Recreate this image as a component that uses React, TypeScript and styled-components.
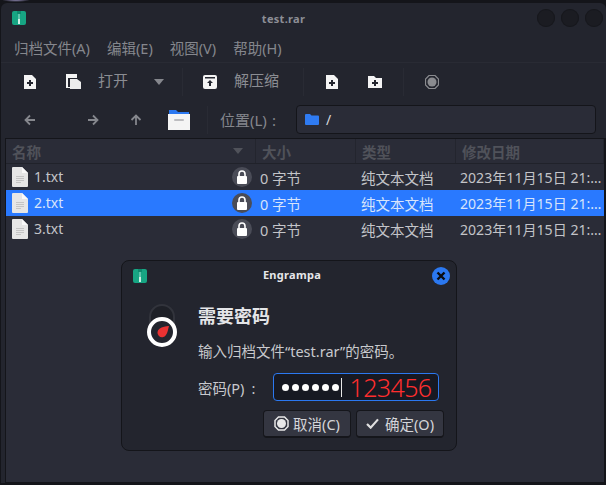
import React from "react";
import styled, { createGlobalStyle } from "styled-components";

const GlobalStyle = createGlobalStyle`
  html, body {
    margin: 0;
    padding: 0;
    width: 606px;
    height: 485px;
    overflow: hidden;
    background: #14151a;
    font-family: "Noto Sans", "Noto Sans CJK SC", sans-serif;
  }
`;

const Desktop = styled.div`
  position: relative;
  width: 606px;
  height: 485px;
  padding: 3px 0 2px 1px;
  box-sizing: border-box;
  background: radial-gradient(ellipse 14px 2px at 16px 0, #8d86b0, transparent);
`;

const Window = styled.div`
  height: 100%;
  background: #23252e;
  border-radius: 6px 6px 0 0;
  display: flex;
  flex-direction: column;
`;

const TitleBar = styled.div`
  height: 30px;
  flex: none;
  display: flex;
  align-items: center;
  padding: 0 3px 0 11px;
  gap: 6px;
`;

const Title = styled.div`
  flex: 1;
  text-align: center;
  font-size: 11px;
  font-weight: 700;
  letter-spacing: 0.3px;
  color: #8d8f96;
  padding-left: 4px;
`;

const WinButton = styled.div`
  width: 18px;
  height: 18px;
  border-radius: 50%;
  background: #1b1c22;
  box-shadow: inset 0 0 0 1px #17181d;
`;

const MenuBar = styled.div`
  height: 29px;
  flex: none;
  display: flex;
  align-items: center;
  padding: 0 13px;
  gap: 17px;
  font-size: 14.500px;
  color: #85878d;
  border-bottom: 1px solid #292b34;
`;

const ToolBar = styled.div`
  height: 34px;
  flex: none;
  display: flex;
  align-items: center;
  box-sizing: border-box;
  padding-top: 3px;
`;

const ToolSlot = styled.div<{ $w: number }>`
  width: ${(p) => p.$w}px;
  flex: none;
  display: flex;
  align-items: center;
  justify-content: center;
`;

const ToolLabel = styled.span<{ $w: number }>`
  width: ${(p) => p.$w}px;
  flex: none;
  font-size: 15px;
  color: #8b8d93;
  margin-top: -4px;
`;

const Sep = styled.div<{ $h?: number }>`
  width: 1px;
  height: ${(p) => p.$h ?? 28}px;
  flex: none;
  background: #292b34;
`;

const LocationBar = styled.div`
  height: 41px;
  flex: none;
  display: flex;
  align-items: center;
  box-sizing: border-box;
  padding-top: 4px;
`;

const LocationLabel = styled.span`
  font-size: 15px;
  color: #85878d;
  margin-left: 12px;
  width: 76px;
  flex: none;
  white-space: nowrap;
`;

const Colon = styled.span<{ $m: number }>`
  margin-left: ${(p) => p.$m}px;
`;

const PathField = styled.div`
  width: 300px;
  height: 29px;
  flex: none;
  box-sizing: border-box;
  background: #2a2c37;
  border: 1px solid #14151a;
  border-radius: 4px;
  display: flex;
  align-items: center;
  padding-left: 8px;
  gap: 7px;
  font-size: 14px;
  color: #d5d6da;
`;

const ListFrame = styled.div`
  flex: 1;
  min-height: 0;
  margin-left: 4px;
  width: 601px;
  background: #2a2c37;
  border: 1px solid #14151a;
  border-right-width: 2px;
  box-sizing: border-box;
  display: flex;
  flex-direction: column;
`;

const columns = "250px 100px 100px 1fr";

const HeaderRow = styled.div`
  display: grid;
  grid-template-columns: ${columns};
  height: 24px;
  flex: none;
  border-bottom: 1px solid #20222a;
`;

const HeaderCell = styled.div`
  display: flex;
  align-items: center;
  justify-content: space-between;
  padding: 0 6px;
  font-size: 14.500px;
  font-weight: 700;
  color: #50525a;
  border-right: 1px solid #23252e;
  &:first-child {
    padding-right: 12px;
  }
`;

const Row = styled.div<{ $selected?: boolean }>`
  display: grid;
  grid-template-columns: ${columns};
  height: 26px;
  flex: none;
  align-items: center;
  font-size: 14.500px;
  color: ${(p) => (p.$selected ? "#d7e4fb" : "#c3c4c8")};
  background: ${(p) => (p.$selected ? "#2979ff" : "transparent")};
`;

const NameCell = styled.div`
  display: flex;
  align-items: center;
  padding-left: 6px;
  gap: 6px;
  position: relative;
  line-height: 24px;
`;

const FileName = styled.span`
  font-size: 14px;
`;

const LockBadge = styled.div`
  position: absolute;
  right: 4px;
  top: 50%;
  margin-top: -10px;
  width: 20px;
  height: 20px;
  border-radius: 50%;
  background: #4a4c57;
  display: flex;
  align-items: center;
  justify-content: center;
`;

const Cell = styled.div<{ $pad: number }>`
  padding-left: ${(p) => p.$pad}px;
  white-space: nowrap;
`;

const DateCell = styled(Cell)`
  font-size: 14.100px;
`;

const Dialog = styled.div`
  position: absolute;
  left: 121px;
  top: 260px;
  width: 336px;
  height: 191px;
  box-sizing: border-box;
  background: #23252e;
  border: 1px solid #14151a;
  border-radius: 8px;
  display: flex;
  flex-direction: column;
`;

const DialogTitleBar = styled.div`
  height: 28px;
  flex: none;
  display: flex;
  align-items: center;
  padding: 0 6px 0 11px;
  margin-top: 1px;
`;

const DialogTitle = styled.div`
  flex: 1;
  text-align: center;
  font-size: 11px;
  font-weight: 700;
  letter-spacing: 0.3px;
  color: #e6e7ea;
  padding-left: 5px;
  margin-top: -3px;
`;

const DialogClose = styled.div`
  width: 18px;
  height: 18px;
  border-radius: 50%;
  background: #2b78f0;
  display: flex;
  align-items: center;
  justify-content: center;
`;

const DialogBody = styled.div`
  display: flex;
  padding: 14px 0 0 23px;
  gap: 19px;
`;

const DialogText = styled.div`
  display: flex;
  flex-direction: column;
`;

const Heading = styled.div`
  font-size: 18px;
  font-weight: 700;
  color: #e4e5e8;
  line-height: 24px;
`;

const Message = styled.div`
  font-size: 14.500px;
  color: #c8c9cd;
  line-height: 18px;
  margin-top: 14px;
  white-space: nowrap;
`;

const FieldRow = styled.div`
  display: flex;
  align-items: center;
  margin-top: 13px;
  padding-left: 76px;
`;

const FieldLabel = styled.span`
  font-size: 14.500px;
  color: #c8c9cd;
  width: 75px;
  flex: none;
  white-space: nowrap;
`;

const PasswordInput = styled.div`
  width: 166px;
  height: 28px;
  box-sizing: border-box;
  background: #171922;
  border: 1px solid #2b78f0;
  border-radius: 4px;
  display: flex;
  align-items: center;
  padding-left: 8px;
`;

const Dots = styled.span`
  display: flex;
  gap: 3.100px;
`;

const Dot = styled.i`
  display: block;
  width: 7px;
  height: 7px;
  border-radius: 50%;
  background: #fff;
`;

const Caret = styled.i`
  display: block;
  width: 1px;
  height: 19px;
  background: #e8e8e8;
  margin: 0 7px 0 2px;
`;

const Typed = styled.span`
  font-size: 25px;
  font-weight: 300;
  line-height: 26px;
  color: #ff2e2e;
  letter-spacing: -0.600px;
`;

const Actions = styled.div`
  display: flex;
  justify-content: flex-end;
  gap: 5px;
  margin-top: 9px;
  padding-right: 12px;
`;

const DialogButton = styled.div`
  width: 88px;
  height: 28px;
  box-sizing: border-box;
  background: #343641;
  border: 1px solid #15161b;
  border-bottom-width: 2px;
  border-radius: 4px;
  display: flex;
  align-items: center;
  justify-content: center;
  gap: 4px;
  font-size: 14.500px;
  color: #d4d5d9;
`;

const ZipIcon = () => (
  <svg width="14" height="14" viewBox="0 0 14 14">
    <rect width="14" height="14" rx="2" fill="#17a583" />
    <rect x="5" y="0" width="4" height="3" fill="#0f8a6e" />
    <rect x="6" y="3" width="2" height="5" fill="#5fc4ac" />
    <rect x="6" y="8" width="2" height="5" fill="#cfeee5" />
  </svg>
);

const NewFileIcon = () => (
  <svg width="12" height="14" viewBox="0 0 12 14">
    <path d="M0 0h8l4 4v10H0z" fill="#f4f4f4" />
    <path d="M5 5h2v2h2v2H7v2H5V9H3V7h2z" fill="#23252e" />
  </svg>
);

const OpenIcon = () => (
  <svg width="15" height="15" viewBox="0 0 15 15">
    <path d="M0 0h11v4H2v9h2v1H0z" fill="#f4f4f4" />
    <path d="M4 5h7l4 3v7H4z" fill="#ececec" />
  </svg>
);

const ExtractIcon = () => (
  <svg width="14" height="14" viewBox="0 0 14 14">
    <path d="M2 0h10a2 2 0 0 1 2 2v10a2 2 0 0 1-2 2H2a2 2 0 0 1-2-2V2a2 2 0 0 1 2-2z" fill="#f4f4f4" />
    <rect x="2" y="2" width="10" height="1.500" fill="#23252e" />
    <path d="M7 5l3 3H8v3H6V8H4z" fill="#23252e" />
  </svg>
);

const AddFolderIcon = () => (
  <svg width="14" height="12" viewBox="0 0 14 12">
    <path d="M0 0h6l2 2h6v10H0z" fill="#f4f4f4" />
    <path d="M6 4h2v2h2v2H8v2H6V8H4V6h2z" fill="#23252e" />
  </svg>
);

const StopIcon = () => (
  <svg width="14" height="14" viewBox="0 0 14 14">
    <path d="M4 .5h6L13.500 4v6L10 13.500H4L.5 10V4z" fill="none" stroke="#8a8b8f" strokeWidth="1.200" />
    <circle cx="7" cy="7" r="4.500" fill="#8a8b8f" />
  </svg>
);

const CaretDown = ({ color = "#85878d" }: { color?: string }) => (
  <svg width="10" height="6" viewBox="0 0 10 6">
    <path d="M0 0h10L5 6z" fill={color} />
  </svg>
);

const Arrow = ({ rotate }: { rotate: number }) => (
  <svg width="12" height="12" viewBox="0 0 12 12" style={{ transform: `rotate(${rotate}deg)` }}>
    <path d="M11 6H2M6 1.500L1.500 6 6 10.500" fill="none" stroke="#85878d" strokeWidth="1.800" />
  </svg>
);

const PlaceIcon = () => (
  <svg width="22" height="20" viewBox="0 0 22 20">
    <path d="M1 0h7l2 2h11v3H1z" fill="#2b78f0" />
    <path d="M0 4h22v16H0z" fill="#f4f4f4" />
    <rect x="6" y="9" width="10" height="2" rx="1" fill="#bdbdc0" />
  </svg>
);

const BlueFolder = () => (
  <svg width="14" height="11" viewBox="0 0 14 11">
    <path d="M0 1a1 1 0 0 1 1-1h4l1.500 1.500H13a1 1 0 0 1 1 1V10a1 1 0 0 1-1 1H1a1 1 0 0 1-1-1z" fill="#2f7bf2" />
  </svg>
);

const TextFileIcon = () => (
  <svg width="16" height="20" viewBox="0 0 16 20">
    <path d="M0 1a1 1 0 0 1 1-1h9l6 6v13a1 1 0 0 1-1 1H1a1 1 0 0 1-1-1z" fill="#e6e6e6" />
    <path d="M10 0l6 6h-6z" fill="#fafafa" />
    <path d="M4 9h8v1H4zM4 11h8v1H4zM4 13h8v1H4zM4 15h5v1H4z" fill="#c4c4c4" />
  </svg>
);

const LockIcon = () => (
  <svg width="12" height="14" viewBox="0 0 12 14">
    <path d="M3 6V4a3 3 0 0 1 6 0v2" fill="none" stroke="#fff" strokeWidth="1.600" />
    <rect x="1" y="6" width="10" height="8" rx="1" fill="#fff" />
  </svg>
);

const PasswordIcon = () => (
  <svg width="34" height="44" viewBox="0 0 34 44">
    <path d="M5 22V13a12 12 0 0 1 24 0v9z" fill="#1e2027" stroke="#32343c" strokeWidth="2" />
    <circle cx="17" cy="28" r="13" fill="#23252e" stroke="#fff" strokeWidth="4" />
    <path d="M24 22C23 25 23 28 21 31A4.600 4.600 0 1 1 14.500 24.800C17 23 21 22 24 22z" fill="#ea3232" />
  </svg>
);

const CloseGlyph = () => (
  <svg width="10" height="10" viewBox="0 0 10 10">
    <path d="M1.500 1.500l7 7M8.500 1.500l-7 7" stroke="#0b0c10" strokeWidth="2.400" />
  </svg>
);

const CancelIcon = () => (
  <svg width="15" height="15" viewBox="0 0 15 15">
    <path d="M4.500 1h6L14 4.500v6L10.500 14h-6L1 10.500v-6z" fill="none" stroke="#e8e8e8" strokeWidth="1.500" />
    <circle cx="7.500" cy="7.500" r="4.500" fill="#e8e8e8" />
  </svg>
);

const CheckIcon = () => (
  <svg width="13" height="11" viewBox="0 0 14 12" style={{ marginRight: 2 }}>
    <path d="M1 6.500L5 10.500 13 1.500" fill="none" stroke="#e0e0e0" strokeWidth="2.400" />
  </svg>
);

const files = ["1.txt", "2.txt", "3.txt"];

export default function App() {
  return (
    <Desktop>
      <GlobalStyle />
      <Window>
        <TitleBar>
          <ZipIcon />
          <Title>test.rar</Title>
          <WinButton />
          <WinButton />
          <WinButton />
        </TitleBar>
        <MenuBar>
          <span>归档文件(A)</span>
          <span>编辑(E)</span>
          <span>视图(V)</span>
          <span>帮助(H)</span>
        </MenuBar>
        <ToolBar>
          <ToolSlot $w={58}>
            <NewFileIcon />
          </ToolSlot>
          <ToolSlot $w={28}>
            <OpenIcon />
          </ToolSlot>
          <ToolSlot $w={11} />
          <ToolLabel $w={55}>打开</ToolLabel>
          <ToolSlot $w={12}>
            <CaretDown />
          </ToolSlot>
          <ToolSlot $w={17} />
          <Sep />
          <ToolSlot $w={20} />
          <ToolSlot $w={14}>
            <ExtractIcon />
          </ToolSlot>
          <ToolSlot $w={17} />
          <ToolLabel $w={69}>解压缩</ToolLabel>
          <Sep />
          <ToolSlot $w={56}>
            <NewFileIcon />
          </ToolSlot>
          <ToolSlot $w={30}>
            <AddFolderIcon />
          </ToolSlot>
          <ToolSlot $w={13} />
          <Sep />
          <ToolSlot $w={56}>
            <StopIcon />
          </ToolSlot>
        </ToolBar>
        <LocationBar>
          <ToolSlot $w={58}>
            <Arrow rotate={0} />
          </ToolSlot>
          <ToolSlot $w={68}>
            <Arrow rotate={180} />
          </ToolSlot>
          <ToolSlot $w={18}>
            <Arrow rotate={90} />
          </ToolSlot>
          <ToolSlot $w={23} />
          <ToolSlot $w={22}>
            <PlaceIcon />
          </ToolSlot>
          <ToolSlot $w={17} />
          <Sep />
          <LocationLabel>
            位置(L)
            <Colon $m={5}>:</Colon>
          </LocationLabel>
          <PathField>
            <BlueFolder />/
          </PathField>
        </LocationBar>
        <ListFrame>
          <HeaderRow>
            <HeaderCell>
              名称
              <CaretDown color="#50525a" />
            </HeaderCell>
            <HeaderCell>大小</HeaderCell>
            <HeaderCell>类型</HeaderCell>
            <HeaderCell>修改日期</HeaderCell>
          </HeaderRow>
          {files.map((name, i) => (
            <Row key={name} $selected={i === 1}>
              <NameCell>
                <TextFileIcon />
                <FileName>{name}</FileName>
                <LockBadge>
                  <LockIcon />
                </LockBadge>
              </NameCell>
              <Cell $pad={4}>0 字节</Cell>
              <Cell $pad={5}>纯文本文档</Cell>
              <DateCell $pad={4}>2023年11月15日 21:…</DateCell>
            </Row>
          ))}
        </ListFrame>
      </Window>
      <Dialog>
        <DialogTitleBar>
          <ZipIcon />
          <DialogTitle>Engrampa</DialogTitle>
          <DialogClose>
            <CloseGlyph />
          </DialogClose>
        </DialogTitleBar>
        <DialogBody>
          <PasswordIcon />
          <DialogText>
            <Heading>需要密码</Heading>
            <Message>输入归档文件“test.rar”的密码。</Message>
          </DialogText>
        </DialogBody>
        <FieldRow>
          <FieldLabel>
            密码(P)
            <Colon $m={7}>:</Colon>
          </FieldLabel>
          <PasswordInput>
            <Dots>
              {[0, 1, 2, 3, 4, 5].map((n) => (
                <Dot key={n} />
              ))}
            </Dots>
            <Caret />
            <Typed>123456</Typed>
          </PasswordInput>
        </FieldRow>
        <Actions>
          <DialogButton>
            <CancelIcon />
            取消(C)
          </DialogButton>
          <DialogButton>
            <CheckIcon />
            确定(O)
          </DialogButton>
        </Actions>
      </Dialog>
    </Desktop>
  );
}
